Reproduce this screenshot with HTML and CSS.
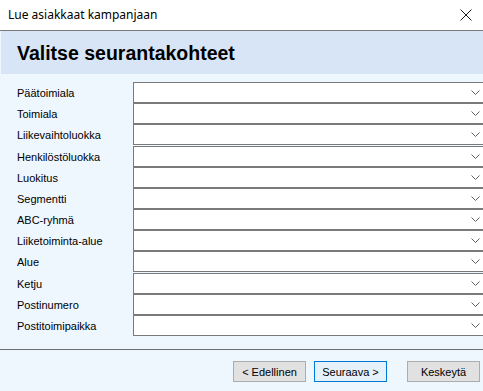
FILE: index.html
```html
<!DOCTYPE html>
<html lang="fi">
<head>
  <meta charset="UTF-8" />
  <title>Lue asiakkaat kampanjaan</title>
  <link rel="stylesheet" href="styles.css">
</head>
<body>
  <div class="window">
    <div class="titlebar">
      <span class="title">Lue asiakkaat kampanjaan</span>
      <svg class="close" width="12" height="12" viewBox="0 0 12 12" aria-label="Sulje">
        <path d="M0.5 0.5 L11.5 11.5 M11.5 0.5 L0.5 11.5" stroke="#1a1a1a" stroke-width="1" fill="none" />
      </svg>
    </div>
    <div class="header">
      <h1>Valitse seurantakohteet</h1>
    </div>
    <div class="form">
      <div class="row"><label>Päätoimiala</label><div class="combo"><svg class="chev" width="9" height="5" viewBox="0 0 9 5"><path d="M0.5 0.5 L4.5 4.5 L8.5 0.5" stroke="#606060" fill="none"/></svg></div></div>
      <div class="row"><label>Toimiala</label><div class="combo"><svg class="chev" width="9" height="5" viewBox="0 0 9 5"><path d="M0.5 0.5 L4.5 4.5 L8.5 0.5" stroke="#606060" fill="none"/></svg></div></div>
      <div class="row"><label>Liikevaihtoluokka</label><div class="combo"><svg class="chev" width="9" height="5" viewBox="0 0 9 5"><path d="M0.5 0.5 L4.5 4.5 L8.5 0.5" stroke="#606060" fill="none"/></svg></div></div>
      <div class="row"><label>Henkilöstöluokka</label><div class="combo"><svg class="chev" width="9" height="5" viewBox="0 0 9 5"><path d="M0.5 0.5 L4.5 4.5 L8.5 0.5" stroke="#606060" fill="none"/></svg></div></div>
      <div class="row"><label>Luokitus</label><div class="combo"><svg class="chev" width="9" height="5" viewBox="0 0 9 5"><path d="M0.5 0.5 L4.5 4.5 L8.5 0.5" stroke="#606060" fill="none"/></svg></div></div>
      <div class="row"><label>Segmentti</label><div class="combo"><svg class="chev" width="9" height="5" viewBox="0 0 9 5"><path d="M0.5 0.5 L4.5 4.5 L8.5 0.5" stroke="#606060" fill="none"/></svg></div></div>
      <div class="row"><label>ABC-ryhmä</label><div class="combo"><svg class="chev" width="9" height="5" viewBox="0 0 9 5"><path d="M0.5 0.5 L4.5 4.5 L8.5 0.5" stroke="#606060" fill="none"/></svg></div></div>
      <div class="row"><label>Liiketoiminta-alue</label><div class="combo"><svg class="chev" width="9" height="5" viewBox="0 0 9 5"><path d="M0.5 0.5 L4.5 4.5 L8.5 0.5" stroke="#606060" fill="none"/></svg></div></div>
      <div class="row"><label>Alue</label><div class="combo"><svg class="chev" width="9" height="5" viewBox="0 0 9 5"><path d="M0.5 0.5 L4.5 4.5 L8.5 0.5" stroke="#606060" fill="none"/></svg></div></div>
      <div class="row"><label>Ketju</label><div class="combo"><svg class="chev" width="9" height="5" viewBox="0 0 9 5"><path d="M0.5 0.5 L4.5 4.5 L8.5 0.5" stroke="#606060" fill="none"/></svg></div></div>
      <div class="row"><label>Postinumero</label><div class="combo"><svg class="chev" width="9" height="5" viewBox="0 0 9 5"><path d="M0.5 0.5 L4.5 4.5 L8.5 0.5" stroke="#606060" fill="none"/></svg></div></div>
      <div class="row"><label>Postitoimipaikka</label><div class="combo"><svg class="chev" width="9" height="5" viewBox="0 0 9 5"><path d="M0.5 0.5 L4.5 4.5 L8.5 0.5" stroke="#606060" fill="none"/></svg></div></div>
    </div>
    <div class="footer">
      <button type="button" class="btn">&lt; Edellinen</button>
      <button type="button" class="btn btn-default">Seuraava &gt;</button>
      <button type="button" class="btn btn-cancel">Keskeytä</button>
    </div>
  </div>
</body>
</html>
```

FILE: styles.css
```css
* {
  box-sizing: border-box;
}
body {
  margin: 0;
  background: #eef6fe;
  font-family: 'Liberation Sans', Arial, sans-serif;
  color: #000;
  overflow: hidden;
}
.window {
  width: 483px;
  height: 391px;
  display: flex;
  flex-direction: column;
  overflow: hidden;
}
.titlebar {
  height: 31px;
  background: #fff;
  border-bottom: 1px solid #7a7a7a;
  display: flex;
  align-items: center;
  justify-content: space-between;
  padding: 0 11px 0 8px;
}
.title {
  font-family: 'Noto Sans', sans-serif;
  font-size: 12px;
  color: #000;
  margin-top: -1px;
}
.close {
  display: block;
}
.header {
  height: 43px;
  margin-left: 1px;
  background: #d8e5f7;
  display: flex;
  align-items: center;
  padding: 2px 0 0 16px;
}
.header h1 {
  margin: 0;
  font-size: 19.5px;
  font-weight: 700;
  color: #000;
}
.form {
  padding: 8px 0 0 17px;
  height: 276px;
  border-bottom: 1px solid #6e6e6e;
  display: flex;
  flex-direction: column;
  gap: 0.18px;
  overflow: hidden;
}
.row {
  display: flex;
  align-items: center;
  height: 21px;
}
.row label {
  flex: 0 0 116px;
  font-size: 11px;
  padding-top: 1px;
}
.combo {
  flex: 0 0 352px;
  height: 21px;
  background: #fff;
  border: 1px solid #7a7a7a;
  display: flex;
  align-items: center;
  padding-left: 337px;
}
.chev {
  display: block;
  flex: 0 0 auto;
}
.footer {
  flex: 1;
  display: flex;
  align-items: flex-start;
  padding: 11px 0 0 233px;
}
.btn {
  flex: 0 0 73px;
  height: 21px;
  margin: 0;
  padding: 0;
  background: #e1e1e1;
  border: 1px solid #adadad;
  font-family: 'Liberation Sans', Arial, sans-serif;
  font-size: 11px;
  color: #000;
}
.btn-default {
  margin-left: 8px;
  border-color: #0078d7;
  background: #e5f1fb;
}
.btn-cancel {
  margin-left: 20px;
}
```
